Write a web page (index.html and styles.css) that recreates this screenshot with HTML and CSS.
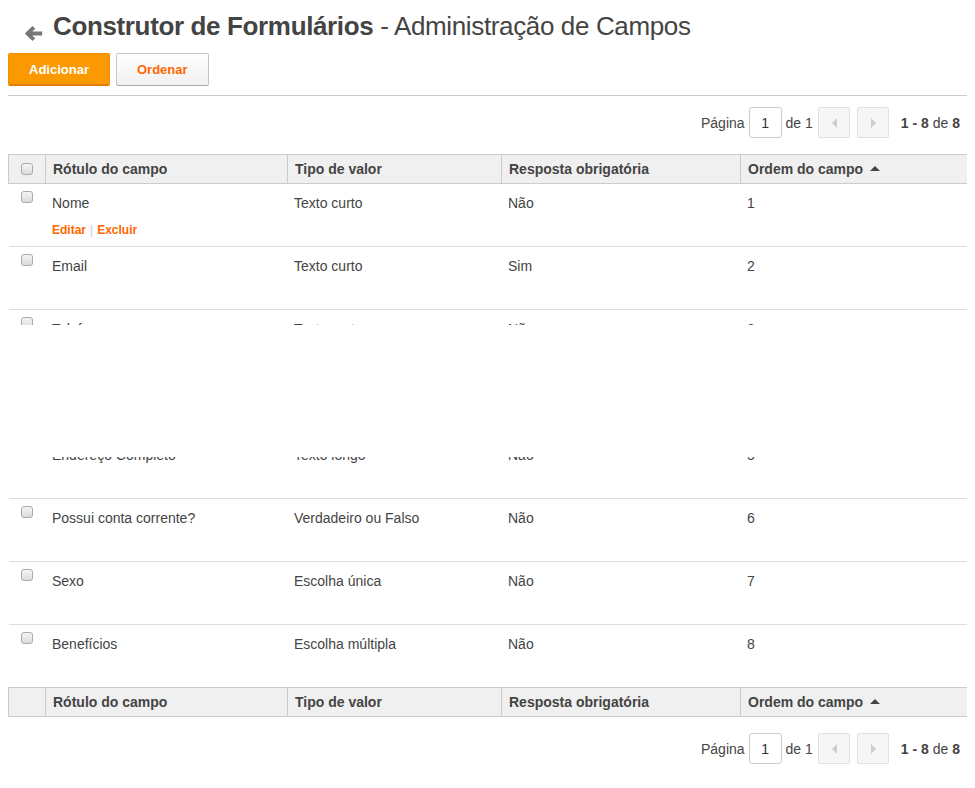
FILE: index.html
```html
<!DOCTYPE html>
<html lang="pt-BR">
<head>
  <meta charset="UTF-8">
  <title>Construtor de Formulários - Administração de Campos</title>
  <link rel="stylesheet" href="styles.css">
</head>
<body>

<h1 class="title">
  <a class="back" href="#"><svg viewBox="0 0 18 16" width="19" height="17"><path d="M8 0.8 L0.8 8 L8 15.2 L10.7 12.5 L7.9 9.9 H17.2 V6.1 H7.9 L10.7 3.5 Z" fill="#777"/></svg></a><strong>Construtor de Formulários</strong> - Administração de Campos
</h1>

<div class="toolbar">
  <button class="btn btn-primary">Adicionar</button>
  <button class="btn">Ordenar</button>
</div>

<div class="pager">
  <span>Página</span>
  <input class="page-input" type="text" value="1">
  <span class="page-total">de 1</span>
  <button class="page-btn prev"></button>
  <button class="page-btn next"></button>
  <span class="page-count"><b>1 - 8</b> de <b>8</b></span>
</div>

<div class="grid-wrap">
  <table class="grid">
    <colgroup>
      <col style="width:37px">
      <col style="width:242px">
      <col style="width:214px">
      <col style="width:239px">
      <col style="width:227px">
    </colgroup>
    <thead>
      <tr>
        <th><span class="check"></span></th>
        <th>Rótulo do campo</th>
        <th>Tipo de valor</th>
        <th>Resposta obrigatória</th>
        <th><span class="sort">Ordem do campo</span></th>
      </tr>
    </thead>
    <tbody>
      <tr class="active">
        <td><span class="check"></span></td>
        <td>Nome<div class="actions"><a href="#">Editar</a><span class="sep">|</span><a href="#">Excluir</a></div></td>
        <td>Texto curto</td>
        <td>Não</td>
        <td>1</td>
      </tr>
      <tr>
        <td><span class="check"></span></td>
        <td>Email<div class="actions"><a href="#">Editar</a><span class="sep">|</span><a href="#">Excluir</a></div></td>
        <td>Texto curto</td>
        <td>Sim</td>
        <td>2</td>
      </tr>
      <tr>
        <td><span class="check"></span></td>
        <td>Telefone<div class="actions"><a href="#">Editar</a><span class="sep">|</span><a href="#">Excluir</a></div></td>
        <td>Texto curto</td>
        <td>Não</td>
        <td>3</td>
      </tr>
      <tr>
        <td><span class="check"></span></td>
        <td>Data de nascimento<div class="actions"><a href="#">Editar</a><span class="sep">|</span><a href="#">Excluir</a></div></td>
        <td>Data</td>
        <td>Não</td>
        <td>4</td>
      </tr>
      <tr>
        <td><span class="check"></span></td>
        <td>Endereço Completo<div class="actions"><a href="#">Editar</a><span class="sep">|</span><a href="#">Excluir</a></div></td>
        <td>Texto longo</td>
        <td>Não</td>
        <td>5</td>
      </tr>
      <tr>
        <td><span class="check"></span></td>
        <td>Possui conta corrente?<div class="actions"><a href="#">Editar</a><span class="sep">|</span><a href="#">Excluir</a></div></td>
        <td>Verdadeiro ou Falso</td>
        <td>Não</td>
        <td>6</td>
      </tr>
      <tr>
        <td><span class="check"></span></td>
        <td>Sexo<div class="actions"><a href="#">Editar</a><span class="sep">|</span><a href="#">Excluir</a></div></td>
        <td>Escolha única</td>
        <td>Não</td>
        <td>7</td>
      </tr>
      <tr>
        <td><span class="check"></span></td>
        <td>Benefícios<div class="actions"><a href="#">Editar</a><span class="sep">|</span><a href="#">Excluir</a></div></td>
        <td>Escolha múltipla</td>
        <td>Não</td>
        <td>8</td>
      </tr>
    </tbody>
    <tfoot>
      <tr>
        <th></th>
        <th>Rótulo do campo</th>
        <th>Tipo de valor</th>
        <th>Resposta obrigatória</th>
        <th><span class="sort">Ordem do campo</span></th>
      </tr>
    </tfoot>
  </table>
  <div class="mask"></div>
</div>

<div class="pager pager-bottom">
  <span>Página</span>
  <input class="page-input" type="text" value="1">
  <span class="page-total">de 1</span>
  <button class="page-btn prev"></button>
  <button class="page-btn next"></button>
  <span class="page-count"><b>1 - 8</b> de <b>8</b></span>
</div>

</body>
</html>
```

FILE: styles.css
```css
body {
  margin: 8px;
  font-family: "Liberation Sans", Arial, sans-serif;
  font-size: 14px;
  color: #444;
  background: #fff;
}
.title {
  margin: 3px 0 11px;
  font-size: 26px;
  line-height: 30px;
  font-weight: normal;
  color: #444;
  letter-spacing: -0.36px;
}
.title strong {
  font-weight: bold;
}
.back {
  display: inline-block;
  width: 19px;
  height: 17px;
  margin: 0 10px 0 16px;
  vertical-align: -7px;
}
.back svg {
  display: block;
}
.toolbar {
  display: flex;
  gap: 6px;
  padding-bottom: 9px;
  border-bottom: 1px solid #ccc;
}
.btn {
  height: 33px;
  padding: 0 20px;
  font-family: "Liberation Sans", Arial, sans-serif;
  font-size: 13px;
  font-weight: bold;
  color: #f60;
  background: linear-gradient(#fff, #f1f1f1);
  border: 1px solid #c4c4c4;
  border-bottom-color: #a8a8a8;
  border-radius: 2px;
  cursor: pointer;
}
.btn-primary {
  color: #fff;
  background: #fb9903;
  border-color: #f08e00;
  border-bottom: 2px solid #e67c00;
}
.pager {
  display: flex;
  justify-content: flex-end;
  align-items: center;
  height: 31px;
  margin: 11px 7px 16px 0;
  color: #444;
}
.pager-bottom {
  margin-top: 16px;
}
.page-input {
  box-sizing: border-box;
  width: 33px;
  height: 31px;
  margin: 0 4px;
  padding: 0;
  border: 1px solid #ccc;
  border-radius: 3px;
  text-align: center;
  font-family: "Liberation Sans", Arial, sans-serif;
  font-size: 14px;
  color: #333;
}
.page-total {
  margin-right: 5px;
}
.page-btn {
  position: relative;
  width: 32px;
  height: 31px;
  padding: 0;
  background: #f6f6f6;
  border: 1px solid #e0e0e0;
  border-radius: 2px;
}
.page-btn::after {
  content: "";
  position: absolute;
  top: 10px;
  left: 13px;
  border-top: 5px solid transparent;
  border-bottom: 5px solid transparent;
}
.prev::after {
  border-right: 5px solid #ccc;
}
.next {
  margin-left: 7px;
}
.next::after {
  border-left: 5px solid #ccc;
}
.page-count {
  margin-left: 12px;
}
.grid-wrap {
  position: relative;
}
.grid {
  width: 100%;
  border-collapse: collapse;
  table-layout: fixed;
}
.grid th {
  padding: 5px 7px;
  line-height: 18px;
  text-align: left;
  font-weight: bold;
  background: #f0f0f0;
  border: 1px solid #ccc;
}
.grid td {
  padding: 10px 6.5px 7px;
  line-height: 18px;
  vertical-align: top;
  border-bottom: 1px solid #ddd;
  color: #444;
}
.grid tbody tr:last-child td {
  border-bottom-color: #ccc;
}
.check {
  display: block;
  box-sizing: border-box;
  width: 12px;
  height: 12px;
  margin: 0 auto;
  border: 1px solid #aaa;
  border-radius: 3px;
  background: linear-gradient(#f4f4f4, #dcdcdc);
}
.grid td .check {
  margin-top: -3px;
}
.sort::after {
  content: "";
  display: inline-block;
  margin-left: 7px;
  vertical-align: 3px;
  border-left: 5px solid transparent;
  border-right: 5px solid transparent;
  border-bottom: 5px solid #444;
}
.actions {
  margin-top: 9px;
  font-size: 12px;
  font-weight: bold;
  visibility: hidden;
}
.active .actions {
  visibility: visible;
}
.actions a {
  color: #f60;
  text-decoration: none;
}
.actions .sep {
  margin: 0 4px;
  color: #ccc;
  font-weight: normal;
}
.mask {
  position: absolute;
  top: 171px;
  left: -8px;
  right: -8px;
  height: 132px;
  background: #fff;
}
```
